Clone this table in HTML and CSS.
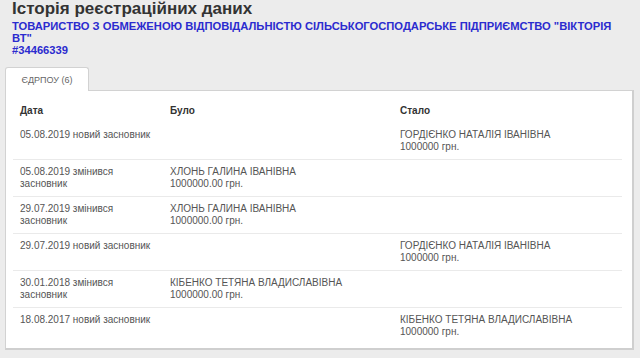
FILE: index.html
```html
<!DOCTYPE html>
<html lang="uk">
<head>
<meta charset="utf-8">
<link rel="stylesheet" href="styles.css">
</head>
<body>
<div class="page">
  <h1 class="title">Історія реєстраційних даних</h1>
  <a class="company">ТОВАРИСТВО З ОБМЕЖЕНОЮ ВІДПОВІДАЛЬНІСТЮ СІЛЬСЬКОГОСПОДАРСЬКЕ ПІДПРИЄМСТВО "ВІКТОРІЯ ВТ"<br>#34466339</a>
  <div class="tabs">
    <div class="tab">ЄДРПОУ (6)</div>
  </div>
  <div class="panel">
    <table class="hist">
      <colgroup><col class="c1"><col class="c2"><col class="c3"></colgroup>
      <thead>
        <tr><th>Дата</th><th>Було</th><th>Стало</th></tr>
      </thead>
      <tbody>
        <tr><td>05.08.2019 новий засновник</td><td></td><td>ГОРДІЄНКО НАТАЛІЯ ІВАНІВНА<br>1000000 грн.</td></tr>
        <tr><td>05.08.2019 змінився<br>засновник</td><td>ХЛОНЬ ГАЛИНА ІВАНІВНА<br>1000000.00 грн.</td><td></td></tr>
        <tr><td>29.07.2019 змінився<br>засновник</td><td>ХЛОНЬ ГАЛИНА ІВАНІВНА<br>1000000.00 грн.</td><td></td></tr>
        <tr><td>29.07.2019 новий засновник</td><td></td><td>ГОРДІЄНКО НАТАЛІЯ ІВАНІВНА<br>1000000 грн.</td></tr>
        <tr><td>30.01.2018 змінився<br>засновник</td><td>КІБЕНКО ТЕТЯНА ВЛАДИСЛАВІВНА<br>1000000.00 грн.</td><td></td></tr>
        <tr><td>18.08.2017 новий засновник</td><td></td><td>КІБЕНКО ТЕТЯНА ВЛАДИСЛАВІВНА<br>1000000 грн.</td></tr>
      </tbody>
    </table>
  </div>
</div>
</body>
</html>
```

FILE: styles.css
```css
html, body {
  margin: 0;
  padding: 0;
  background: #ececec;
  font-family: "Liberation Sans", Arial, sans-serif;
  overflow: hidden;
}
.page {
  padding: 0 5px;
  width: 630px;
}
.title {
  margin: 0;
  padding-left: 7px;
  font-size: 17px;
  line-height: 20px;
  font-weight: bold;
  color: #333;
  margin-top: -1px;
}
.company {
  display: block;
  padding-left: 7px;
  max-width: 604px;
  font-size: 11.2px;
  line-height: 12px;
  font-weight: bold;
  color: #2b2bcf;
  margin-top: 1px;
}
.tabs {
  display: flex;
  margin-top: 11px;
  height: 24px;
  position: relative;
  z-index: 1;
}
.tab {
  width: 84px;
  height: 24px;
  box-sizing: border-box;
  border: 1px solid #d2d2d2;
  border-bottom: none;
  border-radius: 3px 3px 0 0;
  background: #fff;
  color: #666;
  font-size: 9px;
  line-height: 22px;
  text-align: center;
  padding-top: 1px;
}
.panel {
  background: #fff;
  border: 1px solid #d2d2d2;
  border-right: 2px solid #cfcfcf;
  border-bottom: 2px solid #cfcfcf;
  margin-top: -1px;
  width: 629px;
  height: 260px;
  box-sizing: border-box;
  padding: 0 10px 0 7px;
}
.hist {
  width: 100%;
  table-layout: fixed;
  border-collapse: collapse;
  font-size: 10px;
  color: #555;
}
.hist .c1 { width: 150px; }
.hist .c2 { width: 230px; }
.hist th {
  text-align: left;
  font-weight: bold;
  color: #333;
  padding: 14px 0 0 7px;
  height: 18px;
  vertical-align: top;
  line-height: 12px;
}
.hist td {
  vertical-align: top;
  padding: 6px 0 0 7px;
  height: 30px;
  line-height: 12px;
  border-bottom: 1px solid #eaeaea;
}
.hist tbody tr:last-child td {
  border-bottom: none;
}
```
